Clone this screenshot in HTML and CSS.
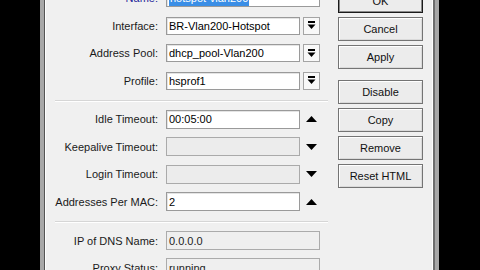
FILE: index.html
```html
<!DOCTYPE html>
<html lang="en">
<head>
    <meta charset="UTF-8">
    <title>Hotspot Server</title>
    <link rel="stylesheet" href="styles.css">
</head>
<body>
    <div class="window">
        <div class="frame">
            <div class="dialog">
                <form class="form">
                    <div class="group group-top">
                        <div class="row">
                            <label class="label label-name">Name:</label>
                            <div class="field full"><span class="sel">hotspot-vlan200</span></div>
                        </div>
                        <div class="row">
                            <label class="label">Interface:</label>
                            <div class="combo">
                                <div class="field short">BR-Vlan200-Hotspot</div>
                                <div class="drop">
                                    <svg width="9" height="9" viewBox="0 0 9 9"><rect x="1" y="0" width="7" height="2"/><path d="M0.5 3.5h8L4.5 8z"/></svg>
                                </div>
                            </div>
                        </div>
                        <div class="row">
                            <label class="label">Address Pool:</label>
                            <div class="combo">
                                <div class="field short">dhcp_pool-Vlan200</div>
                                <div class="drop">
                                    <svg width="9" height="9" viewBox="0 0 9 9"><rect x="1" y="0" width="7" height="2"/><path d="M0.5 3.5h8L4.5 8z"/></svg>
                                </div>
                            </div>
                        </div>
                        <div class="row">
                            <label class="label">Profile:</label>
                            <div class="combo">
                                <div class="field short">hsprof1</div>
                                <div class="drop">
                                    <svg width="9" height="9" viewBox="0 0 9 9"><rect x="1" y="0" width="7" height="2"/><path d="M0.5 3.5h8L4.5 8z"/></svg>
                                </div>
                            </div>
                        </div>
                    </div>

                    <div class="sep"></div>

                    <div class="group group-mid">
                        <div class="row">
                            <label class="label">Idle Timeout:</label>
                            <div class="combo">
                                <div class="field short">00:05:00</div>
                                <div class="spin"><svg width="11" height="6" viewBox="0 0 11 6"><path d="M0 6h11L5.5 0z"/></svg></div>
                            </div>
                        </div>
                        <div class="row">
                            <label class="label">Keepalive Timeout:</label>
                            <div class="combo">
                                <div class="field short off"></div>
                                <div class="spin"><svg width="11" height="6" viewBox="0 0 11 6"><path d="M0 0h11L5.5 6z"/></svg></div>
                            </div>
                        </div>
                        <div class="row">
                            <label class="label">Login Timeout:</label>
                            <div class="combo">
                                <div class="field short off"></div>
                                <div class="spin"><svg width="11" height="6" viewBox="0 0 11 6"><path d="M0 0h11L5.5 6z"/></svg></div>
                            </div>
                        </div>
                        <div class="row">
                            <label class="label">Addresses Per MAC:</label>
                            <div class="combo">
                                <div class="field short">2</div>
                                <div class="spin"><svg width="11" height="6" viewBox="0 0 11 6"><path d="M0 6h11L5.5 0z"/></svg></div>
                            </div>
                        </div>
                    </div>

                    <div class="sep"></div>

                    <div class="group group-low">
                        <div class="row">
                            <label class="label">IP of DNS Name:</label>
                            <div class="field full ro">0.0.0.0</div>
                        </div>
                        <div class="row">
                            <label class="label">Proxy Status:</label>
                            <div class="field full ro">running</div>
                        </div>
                    </div>
                </form>

                <div class="buttons">
                    <button type="button" class="btn btn-default">OK</button>
                    <button type="button" class="btn">Cancel</button>
                    <button type="button" class="btn">Apply</button>
                    <button type="button" class="btn btn-gap">Disable</button>
                    <button type="button" class="btn">Copy</button>
                    <button type="button" class="btn">Remove</button>
                    <button type="button" class="btn">Reset HTML</button>
                </div>
            </div>
        </div>
    </div>
</body>
</html>
```

FILE: styles.css
```css
body {
    margin: 0;
    background-color: #000;
    font-family: "Liberation Sans", Arial, sans-serif;
    font-size: 11px;
    color: #1a1a1a;
    overflow: hidden;
}
.window {
    margin-left: 40px;
    width: 399px;
    height: 300px;
    box-sizing: border-box;
    border-left: 4px solid #a8a8a8;
    border-right: 4px solid #a8a8a8;
}
.frame {
    height: 100%;
    border-left: 1px solid #555;
    border-right: 2px solid #6e6e6e;
}
.dialog {
    height: 100%;
    box-sizing: border-box;
    border-left: 1px solid #fff;
    border-right: 1px solid #fff;
    background-color: #f0f0f0;
    display: flex;
    align-items: flex-start;
}
.form {
    width: 292px;
    margin: -11px 0 0 0;
}
.group {
    display: flex;
    flex-direction: column;
}
.group-top {
    gap: 9.5px;
}
.group-top .row {
    height: 18px;
}
.group-mid {
    gap: 8.67px;
}
.group-mid .row,
.group-low .row {
    height: 19px;
}
.group-low {
    gap: 8px;
}
.row {
    display: grid;
    grid-template-columns: 112px 154px;
    column-gap: 8px;
    align-items: center;
}
.label {
    text-align: right;
    white-space: nowrap;
}
.label-name {
    color: #1f1f9a;
}
.combo {
    display: flex;
    gap: 3px;
    height: 100%;
}
.field {
    box-sizing: border-box;
    height: 100%;
    border: 1px solid #9a9a9a;
    background-color: #fff;
    box-shadow: inset 1px 1px 0 #e4e4e4;
    padding-left: 2px;
    display: flex;
    align-items: center;
    white-space: nowrap;
    overflow: hidden;
    color: #000;
}
.full {
    width: 154px;
}
.short {
    width: 134px;
}
.off {
    background-color: #ececec;
    border-color: #aaa;
    box-shadow: none;
}
.ro {
    background-color: #efefef;
    border-color: #ababab;
    box-shadow: none;
    color: #222;
}
.sel {
    background-color: #3a8ee6;
    color: #fff;
    line-height: 16px;
    padding: 0 1px;
}
.drop {
    width: 17px;
    box-sizing: border-box;
    border: 1px solid #a4a4a4;
    background-color: #f8f8f8;
    display: flex;
    align-items: center;
    justify-content: center;
}
.spin {
    width: 17px;
    display: flex;
    align-items: center;
    justify-content: center;
}
.sep {
    margin: 10px 10px 8px 9px;
    border-top: 1px solid #d6d6d6;
    border-bottom: 1px solid #fff;
}
.buttons {
    width: 85px;
    margin: -11px 9px 0 0;
    display: flex;
    flex-direction: column;
    gap: 4px;
}
.btn {
    height: 24px;
    padding: 0;
    font-family: "Liberation Sans", Arial, sans-serif;
    font-size: 11px;
    color: #111;
    background-color: #ececec;
    border: 1px solid #747474;
    box-shadow: inset 1px 1px 0 #fff, inset -1px -1px 0 #dadada;
}
.btn-default {
    border-color: #1a1a1a;
    box-shadow: inset 0 0 0 1px #8a8a8a;
}
.btn-gap {
    margin-top: 7px;
}
```
